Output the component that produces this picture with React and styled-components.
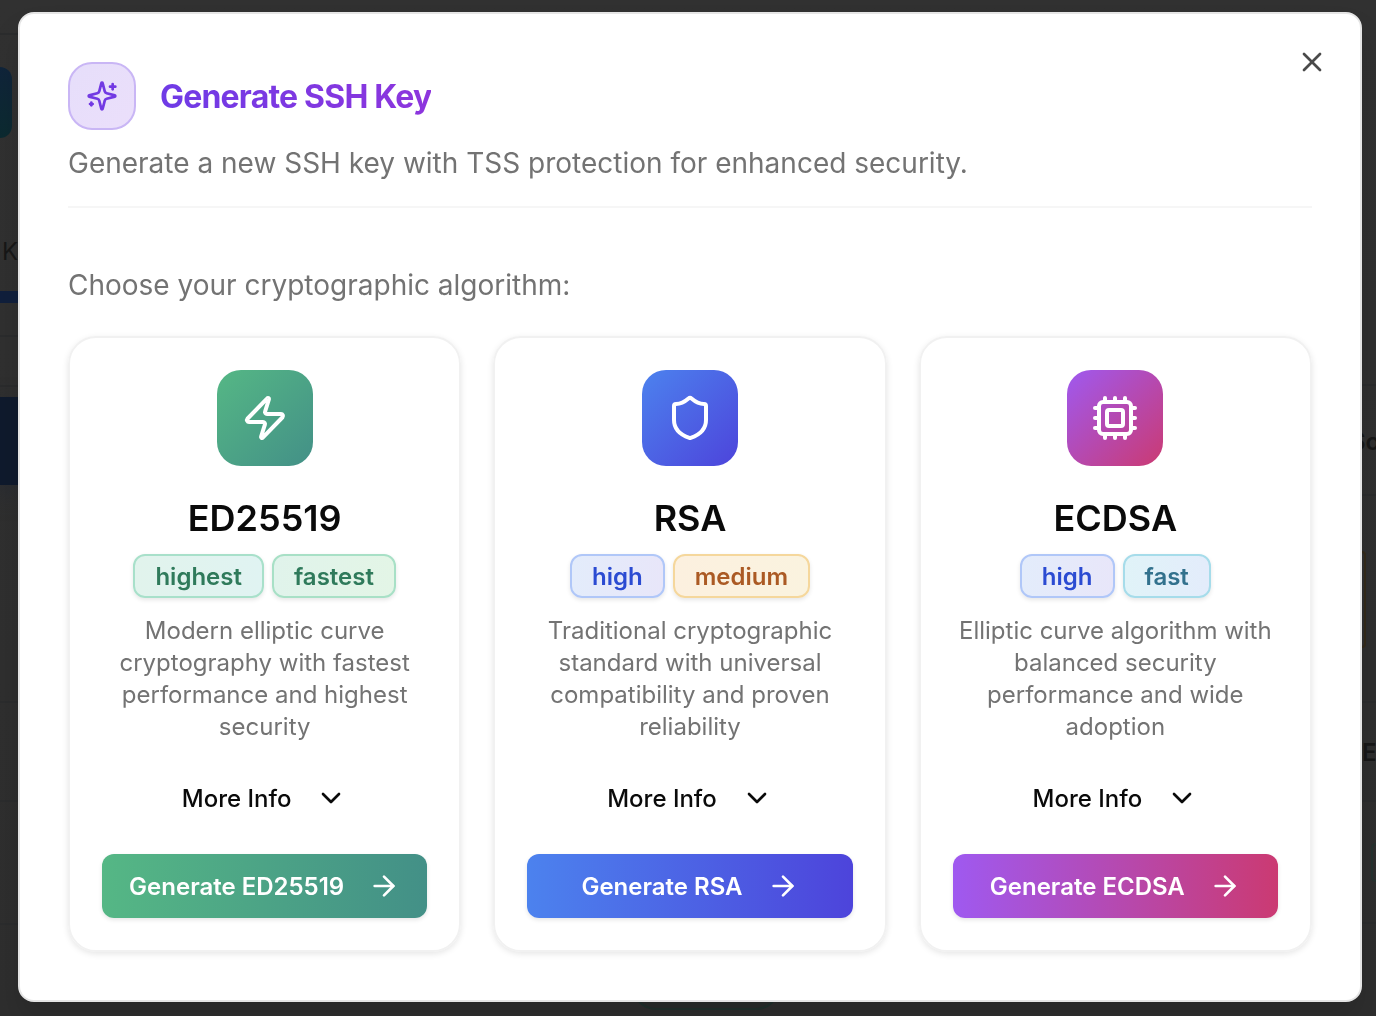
import React from "react";
import styled, { createGlobalStyle } from "styled-components";
import { X, Zap, Shield, Cpu, ChevronDown, ArrowRight } from "lucide-react";

const GlobalStyle = createGlobalStyle`
  *, *::before, *::after { box-sizing: border-box; }
  body {
    margin: 0;
    font-family: Inter, "Liberation Sans", sans-serif;
    font-optical-sizing: none;
    color: #0a0a0a;
    background: #313131;
  }
  h1, h2, p, ul { margin: 0; padding: 0; }
  button { font-family: inherit; cursor: pointer; }
  svg { flex-shrink: 0; display: block; }
`;

const Page = styled.div`
  display: grid;
  grid-template-columns: 18px 1fr 14px;
  height: 100vh;
  overflow: hidden;
  background: linear-gradient(#313131 0, #2e2e2e 100%);
`;

const Rail = styled.div`
  display: flex;
  flex-direction: column;
  min-width: 0;
  overflow: hidden;
  color: #171717;
  font-size: 24px;
  line-height: 32px;
  font-weight: ${(p) => p.$weight || 400};
`;

const Strip = styled.div`
  flex: none;
  height: ${(p) => p.$h}px;
  background: ${(p) => p.$bg || "transparent"};
  border-bottom: ${(p) => (p.$line ? "2px solid #2b2c2d" : "0")};
  box-shadow: ${(p) => (p.$glow ? "0 8px 24px #262b35" : "none")};
  white-space: nowrap;
  text-indent: ${(p) => p.$indent || 0}px;
`;

const Tile = styled(Strip)`
  width: 12px;
  border-radius: 0 20px 20px 0;
`;

const Outline = styled(Strip)`
  border: 2px solid ${(p) => p.$edge};
  border-left: ${(p) => (p.$side === "right" ? "0" : "")};
  border-right: ${(p) => (p.$side === "left" ? "0" : "")};
  width: ${(p) => p.$w}px;
  align-self: ${(p) => (p.$side === "left" ? "flex-end" : "flex-start")};
  border-radius: ${(p) => (p.$side === "left" ? "12px 0 0 12px" : "0 12px 12px 0")};
`;

const Floor = styled.div`
  display: flex;
  justify-content: center;
  align-items: flex-end;
  padding: 0 0 6px 32px;
`;

const FloorPill = styled.div`
  width: 148px;
  height: 48px;
  border: 2px solid #20302c;
  border-radius: 24px;
  background: #292c2b;
`;

const Overlay = styled.div`
  position: fixed;
  inset: 0;
  display: grid;
  align-items: start;
  padding: 12px 14px 14px 18px;
`;

const Dialog = styled.section`
  position: relative;
  padding: 48px;
  background: #fff;
  border: 2px solid #e5e5e5;
  border-radius: 16px;
  box-shadow: 0 20px 30px rgba(0, 0, 0, 0.12);
`;

const CloseButton = styled.button`
  position: absolute;
  top: 32px;
  right: 32px;
  padding: 0;
  border: 0;
  background: none;
  color: #4a4a4a;
`;

const Header = styled.header`
  padding-bottom: 22px;
  border-bottom: 2px solid #f6f6f6;
`;

const TitleRow = styled.div`
  display: flex;
  align-items: center;
  gap: 24px;
  margin-bottom: 12px;
`;

const TitleIcon = styled.span`
  display: grid;
  place-items: center;
  width: 68px;
  height: 68px;
  color: #7239e3;
  background: linear-gradient(135deg, #e6defa, #ebdffb);
  border: 2px solid #c9b6f5;
  border-radius: 24px;
`;

const Title = styled.h1`
  padding-top: 2px;
  font-size: 32px;
  line-height: 40px;
  font-weight: 700;
  letter-spacing: -0.025em;
  color: transparent;
  background: linear-gradient(90deg, #6f3be6, #8d35dd);
  background-clip: text;
`;

const Lead = styled.p`
  font-size: 28px;
  line-height: 42px;
  color: #737373;
`;

const Prompt = styled(Lead)`
  margin: 56px 0 30px;
`;

const Cards = styled.div`
  display: grid;
  grid-template-columns: repeat(3, minmax(0, 1fr));
  gap: 32px;
`;

const Card = styled.article`
  display: flex;
  flex-direction: column;
  align-items: center;
  padding: 32px;
  border: 2px solid #f1f1f1;
  border-radius: 28px;
  box-shadow: 0 2px 6px rgba(0, 0, 0, 0.1);
`;

const CardIcon = styled.span`
  display: grid;
  place-items: center;
  width: 96px;
  height: 96px;
  margin-bottom: 24px;
  color: #fff;
  background: linear-gradient(135deg, ${(p) => p.$from}, ${(p) => p.$to});
  border-radius: 24px;
`;

const CardTitle = styled.h2`
  margin-bottom: 8px;
  font-size: 36px;
  line-height: 56px;
  font-weight: 600;
`;

const Badges = styled.div`
  display: flex;
  gap: 8px;
  margin-bottom: 16px;
`;

const tones = {
  emerald: ["#e1f3ec", "#e0f3f2", "#a8e0ca", "#2f7a5b"],
  green: ["#e0f3eb", "#e3f5e6", "#a8e0c6", "#2f7a5b"],
  blue: ["#e3ecfb", "#e8e6f9", "#b0c7f8", "#2b4bd2"],
  amber: ["#fcf0df", "#faf3df", "#f5d79c", "#ab5a24"],
  cyan: ["#e0f3f8", "#e3ecfb", "#a6dcea", "#32718d"],
};

const Badge = styled.span`
  padding: 5px 20px 3px;
  font-size: 24px;
  line-height: 32px;
  font-weight: 600;
  color: ${(p) => tones[p.$tone][3]};
  background: linear-gradient(90deg, ${(p) => tones[p.$tone][0]}, ${(p) => tones[p.$tone][1]});
  border: 2px solid ${(p) => tones[p.$tone][2]};
  border-radius: 12px;
  box-shadow: 0 2px 4px rgba(0, 0, 0, 0.1);
`;

const Description = styled.p`
  padding: 1px 0 23px;
  font-size: 24px;
  line-height: 32px;
  text-align: center;
  color: #737373;
`;

const Action = styled.button`
  display: flex;
  align-items: center;
  justify-content: center;
  gap: 24px;
  width: 100%;
  height: 64px;
  padding: 0;
  border: 0;
  border-radius: 12px;
  font-size: 24px;
  line-height: 32px;
  font-weight: 500;
  white-space: nowrap;
  color: #0a0a0a;
  background: none;
`;

const ActionLabel = styled.span`
  padding-top: 2px;
`;

const GenerateAction = styled(Action)`
  margin-top: 24px;
  font-weight: 600;
  color: #fff;
  background: linear-gradient(90deg, ${(p) => p.$from}, ${(p) => p.$to});
  box-shadow: 0 2px 4px rgba(0, 0, 0, 0.1);
`;

const algorithms = [
  {
    name: "ED25519",
    Icon: Zap,
    from: "#55b785",
    to: "#439087",
    badges: [["highest", "emerald"], ["fastest", "green"]],
    text: "Modern elliptic curve cryptography with fastest performance and highest security",
  },
  {
    name: "RSA",
    Icon: Shield,
    from: "#4c82ee",
    to: "#4d44db",
    badges: [["high", "blue"], ["medium", "amber"]],
    text: "Traditional cryptographic standard with universal compatibility and proven reliability",
  },
  {
    name: "ECDSA",
    Icon: Cpu,
    from: "#9f59f0",
    to: "#cb3a72",
    badges: [["high", "blue"], ["fast", "cyan"]],
    text: "Elliptic curve algorithm with balanced security performance and wide adoption",
  },
];

function Sparkles() {
  return (
    <svg width="32" height="32" viewBox="0 0 24 24" fill="none" stroke="currentColor" strokeWidth="2" strokeLinecap="round" strokeLinejoin="round" aria-hidden="true">
      <path d="M9.937 15.5A2 2 0 0 0 8.5 14.063l-6.135-1.582a.5.5 0 0 1 0-.962L8.5 9.936A2 2 0 0 0 9.937 8.5l1.582-6.135a.5.5 0 0 1 .963 0L14.063 8.5A2 2 0 0 0 15.5 9.937l6.135 1.581a.5.5 0 0 1 0 .964L15.5 14.063a2 2 0 0 0-1.437 1.437l-1.582 6.135a.5.5 0 0 1-.963 0z" />
      <path d="M20 3v4" />
      <path d="M22 5h-4" />
      <path d="M4 17v2" />
      <path d="M5 18H3" />
    </svg>
  );
}

function Backdrop() {
  return (
    <Page aria-hidden="true">
      <Rail>
        <Strip $h={35} $line />
        <Strip $h={32} />
        <Tile $h={71} $bg="linear-gradient(#10243a, #0c2a30)" />
        <Strip $h={98} />
        <Strip $h={55} $indent={2}>K</Strip>
        <Strip $h={12} $bg="#101f3c" />
        <Strip $h={34} $line />
        <Strip $h={50} $line />
        <Strip $h={10} />
        <Strip $h={88} $bg="#0f1a2d" $glow />
        <Strip $h={218} $line />
        <Strip $h={99} $line />
        <Strip $h={123} $line />
      </Rail>
      <Floor>
        <FloorPill />
      </Floor>
      <Rail $weight={600}>
        <Strip $h={386} $line />
        <Strip $h={40} />
        <Strip $h={70} $line $indent={-12}>So</Strip>
        <Strip $h={55} />
        <Outline $h={97} $w={4} $side="right" $edge="#332a1a" />
        <Strip $h={55} $line />
        <Strip $h={34} />
        <Strip $h={65} $line>E</Strip>
        <Strip $h={41} />
        <Outline $h={39} $w={5} $side="left" $edge="#263330" />
        <Strip $h={42} $line />
      </Rail>
    </Page>
  );
}

export default function App() {
  return (
    <>
      <GlobalStyle />
      <Backdrop />
      <Overlay>
        <Dialog role="dialog" aria-modal="true" aria-labelledby="dialog-title">
          <CloseButton type="button" aria-label="Close">
            <X size={32} />
          </CloseButton>
          <Header>
            <TitleRow>
              <TitleIcon>
                <Sparkles />
              </TitleIcon>
              <Title id="dialog-title">Generate SSH Key</Title>
            </TitleRow>
            <Lead>Generate a new SSH key with TSS protection for enhanced security.</Lead>
          </Header>
          <Prompt>Choose your cryptographic algorithm:</Prompt>
          <Cards>
            {algorithms.map(({ name, Icon, from, to, badges, text }) => (
              <Card key={name}>
                <CardIcon $from={from} $to={to}>
                  <Icon size={48} />
                </CardIcon>
                <CardTitle>{name}</CardTitle>
                <Badges>
                  {badges.map(([label, tone]) => (
                    <Badge key={label} $tone={tone}>{label}</Badge>
                  ))}
                </Badges>
                <Description>{text}</Description>
                <Action type="button" aria-expanded="false">
                  <ActionLabel>More Info</ActionLabel>
                  <ChevronDown size={32} />
                </Action>
                <GenerateAction type="button" $from={from} $to={to}>
                  <ActionLabel>Generate {name}</ActionLabel>
                  <ArrowRight size={32} />
                </GenerateAction>
              </Card>
            ))}
          </Cards>
        </Dialog>
      </Overlay>
    </>
  );
}
